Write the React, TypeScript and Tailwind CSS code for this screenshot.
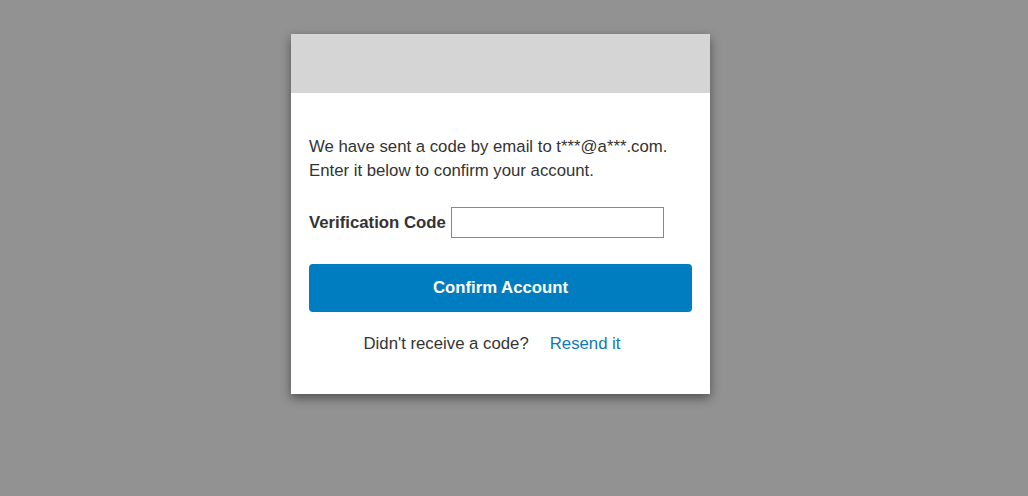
const App = () => {
  return (
    <div className="w-screen h-[496px] bg-[#929292] font-['Liberation_Sans',Arial,sans-serif]">
      <div className="absolute left-[291px] top-[34px] w-[419px] h-[360px] bg-white shadow-[0_4px_10px_rgba(0,0,0,0.45)] flex flex-col">
        <div className="h-[59px] bg-[#d5d5d5]" />
        <div className="px-[18px] pt-[42px] text-[#333] text-[16.75px]">
          <p className="leading-[24px]">
            We have sent a code by email to t***@a***.com.
            <br />
            Enter it below to confirm your account.
          </p>
          <div className="flex items-center mt-[24px] gap-[5px]">
            <label className="font-bold">Verification Code</label>
            <input className="w-[213px] h-[31px] border border-[#888] bg-white outline-none px-2" />
          </div>
          <button className="mt-[26px] w-[383px] h-[48px] rounded-[4px] bg-[#007dc1] text-white font-bold text-[16.75px] leading-none">
            Confirm Account
          </button>
          <div className="flex justify-center items-center mt-[19px] gap-[21px] pr-[17px]">
            <span>Didn't receive a code?</span>
            <a className="text-[#0a7ab8]">Resend it</a>
          </div>
        </div>
      </div>
    </div>
  )
}

export default App
